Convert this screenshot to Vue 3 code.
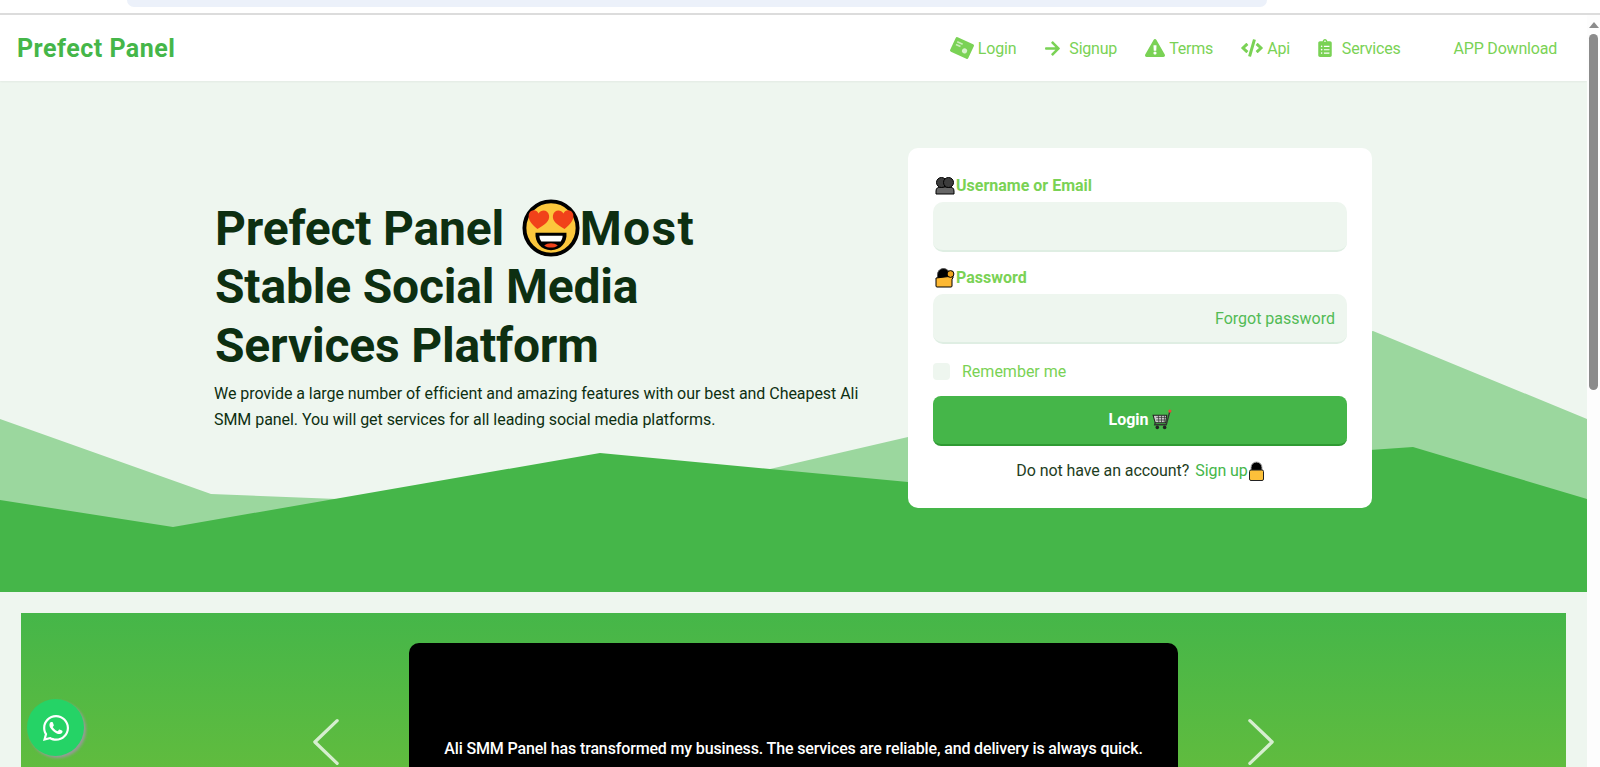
<template>
  <div class="window">
    <div class="chrome">
      <div class="address"></div>
    </div>
    <div class="viewport">
      <div class="page">
        <nav class="navbar">
          <a class="brand">Prefect Panel</a>
          <div class="nav-links">
            <a class="nav-link">
              <svg class="i-ticket" viewBox="0 0 24 24"><g transform="rotate(25 12 12)"><rect x="2" y="4" width="20" height="16" rx="1.5" fill="#7ad255"/><rect x="5" y="7.500" width="6" height="1.600" fill="#fff" opacity=".6"/><rect x="5" y="10.500" width="5" height="1.600" fill="#fff" opacity=".6"/><circle cx="15.500" cy="13.500" r="2.600" fill="#fff" opacity=".7"/></g></svg>
              <span>Login</span>
            </a>
            <a class="nav-link">
              <svg class="i-arrow" viewBox="0 0 448 512"><path d="M190.5 66.9l22.2-22.2c9.4-9.4 24.6-9.4 33.9 0L441 239c9.4 9.4 9.4 24.6 0 33.9L246.6 467.3c-9.4 9.4-24.6 9.4-33.9 0l-22.2-22.2c-9.5-9.5-9.3-25 .4-34.3L311.4 296H24c-13.3 0-24-10.7-24-24v-32c0-13.3 10.7-24 24-24h287.4L190.9 101.2c-9.8-9.3-10-24.8-.4-34.3z"/></svg>
              <span>Signup</span>
            </a>
            <a class="nav-link">
              <svg class="i-warn" viewBox="0 0 576 512"><path d="M569.517 440.013C587.975 472.007 564.806 512 527.94 512H48.054c-36.937 0-59.999-40.055-41.577-71.987L246.423 24.035c18.467-32.009 64.72-31.951 83.154 0l239.94 415.978zM288 354c-25.405 0-46 20.595-46 46s20.595 46 46 46 46-20.595 46-46-20.595-46-46-46zm-43.673-165.346l7.418 136c.347 6.364 5.609 11.346 11.982 11.346h48.546c6.373 0 11.635-4.982 11.982-11.346l7.418-136c.375-6.874-5.098-12.654-11.982-12.654h-63.383c-6.884 0-12.356 5.78-11.981 12.654z"/></svg>
              <span>Terms</span>
            </a>
            <a class="nav-link">
              <svg class="i-code" viewBox="0 0 640 512"><path d="M278.9 511.5l-61-17.7c-6.4-1.8-10-8.5-8.2-14.9L346.2 8.7c1.8-6.4 8.5-10.1 14.9-8.2l61 17.7c6.4 1.8 10 8.5 8.2 14.9L293.8 503.3c-1.9 6.4-8.5 10.1-14.9 8.2zm-114-112.2l43.5-46.4c4.6-4.9 4.3-12.7-.8-17.2L117 256l90.6-79.7c5.1-4.5 5.5-12.3.8-17.2l-43.5-46.4c-4.5-4.8-12.1-5.1-17-.5L3.8 247.2c-5.1 4.7-5.1 12.8 0 17.5l144.1 135.1c4.9 4.6 12.5 4.4 17-.5zm327.2.6l144.1-135.1c5.1-4.7 5.1-12.8 0-17.5L492.1 112.1c-4.8-4.5-12.4-4.3-17 .5L431.6 159c-4.6 4.9-4.3 12.7.8 17.2L523 256l-90.6 79.7c-5.1 4.5-5.5 12.3-.8 17.2l43.5 46.4c4.5 4.9 12.1 5.1 17 .6z"/></svg>
              <span>Api</span>
            </a>
            <a class="nav-link">
              <svg class="i-clip" viewBox="0 0 384 512"><path d="M336 64h-80c0-35.3-28.7-64-64-64s-64 28.7-64 64H48C21.5 64 0 85.5 0 112v352c0 26.5 21.5 48 48 48h288c26.5 0 48-21.5 48-48V112c0-26.5-21.5-48-48-48zM96 424c-13.3 0-24-10.7-24-24s10.7-24 24-24 24 10.7 24 24-10.7 24-24 24zm0-96c-13.3 0-24-10.7-24-24s10.7-24 24-24 24 10.7 24 24-10.7 24-24 24zm0-96c-13.3 0-24-10.7-24-24s10.7-24 24-24 24 10.7 24 24-10.7 24-24 24zm96-192c13.3 0 24 10.7 24 24s-10.7 24-24 24-24-10.7-24-24 10.7-24 24-24zm128 368c0 4.4-3.6 8-8 8H168c-4.4 0-8-3.6-8-8v-16c0-4.4 3.6-8 8-8h144c4.4 0 8 3.6 8 8v16zm0-96c0 4.4-3.6 8-8 8H168c-4.4 0-8-3.6-8-8v-16c0-4.4 3.6-8 8-8h144c4.4 0 8 3.6 8 8v16zm0-96c0 4.4-3.6 8-8 8H168c-4.4 0-8-3.6-8-8v-16c0-4.4 3.6-8 8-8h144c4.4 0 8 3.6 8 8v16z"/></svg>
              <span>Services</span>
            </a>
            <a class="nav-link app-link">APP Download</a>
          </div>
        </nav>

        <section class="hero">
          <svg class="waves" viewBox="0 0 1587 511" preserveAspectRatio="none">
            <polygon fill="#9bd79e" points="0,338 211,413 337,418 770,388 908,356 1373,250 1587,338 1587,511 0,511" />
            <polygon fill="#45b649" points="0,419 173,446 600,372 908,401 1413,366 1587,418 1587,511 0,511" />
          </svg>
          <div class="hero-text">
            <h1>
              Prefect Panel
              <svg class="face" viewBox="0 0 60 60">
                <circle cx="30" cy="30" r="27.500" fill="#fcc73c" stroke="#000" stroke-width="4" />
                <path d="M16 31C10 26 6 22 7 16c1-5 8-6 10-1 3-5 10-4 11 2 1 6-5 10-12 14z" fill="#f1421a" />
                <path d="M44 31c-7-4-13-8-12-14 1-6 8-7 11-2 2-5 9-4 10 1 1 6-3 10-9 15z" fill="#f1421a" />
                <path d="M14 35h32c1 10-6 18-16 18S13 45 14 35z" fill="#000" />
                <path d="M18 38h24c0 3-1 4-2 6H20c-1-2-2-3-2-6z" fill="#fff" />
                <path d="M23 48c4-3 10-3 14 0-4 3-10 3-14 0z" fill="#f1421a" />
              </svg>
              <span class="most">Most</span>
              Stable Social Media
              Services Platform
            </h1>
            <p>We provide a large number of efficient and amazing features with our best and Cheapest Ali SMM panel. You will get services for all leading social media platforms.</p>
          </div>

          <form class="login-card" @submit.prevent>
            <label class="field-label">
              <svg class="emoji" viewBox="0 0 20 20">
                <path d="M1 18v-3c0-3 2-4 5-4h8c3 0 5 1 5 4v3z" fill="#666" stroke="#000" />
                <circle cx="6.500" cy="6.500" r="5" fill="#3c3c3c" stroke="#000" />
                <circle cx="13.500" cy="6.500" r="5" fill="#3c3c3c" stroke="#000" />
              </svg>
              Username or Email
            </label>
            <div class="input"></div>

            <label class="field-label">
              <svg class="emoji" viewBox="0 0 20 20">
                <path d="M2.500 11V6.500a6 6 0 0 1 12 0V11z" fill="#000" stroke="#555" />
                <path d="M1 10 14 8.500l2-1 2 1v1.500l-1 1v7a1 1 0 0 1-1 1H2a1 1 0 0 1-1-1z" fill="#fdb833" stroke="#000" />
                <circle cx="15.500" cy="6" r="3.400" fill="#f0a41f" stroke="#000" />
              </svg>
              Password
            </label>
            <div class="input input-pass"><a class="forgot">Forgot password</a></div>

            <div class="remember">
              <span class="check"></span>
              <span>Remember me</span>
            </div>

            <button class="login-btn" type="button">
              Login
              <svg class="emoji cart" viewBox="0 0 20 20">
                <path d="M2 6h13l-1 7H4z" fill="#ccc" stroke="#222" />
                <path d="M4 13l-.5 2h11l3.500-13" fill="none" stroke="#333" stroke-width="1.300" />
                <path d="M5 8h9.500M5 10.500h9M7 6l.5 7M10 6v7M13 6l-.5 7" stroke="#333" stroke-width=".7" />
                <circle cx="18" cy="2" r="1.500" fill="#e8483b" />
                <circle cx="6" cy="17.500" r="1.700" fill="#222" />
                <circle cx="13" cy="17.500" r="1.700" fill="#222" />
              </svg>
            </button>

            <div class="signup-row">
              <span>Do not have an account?</span>
              <a class="signup">Sign up</a>
              <svg class="lock" viewBox="0 0 15 20">
                <path d="M2 11V6.500a5.500 5.500 0 0 1 11 0V11z" fill="#000" stroke="#aaa" />
                <rect x=".5" y="9" width="14" height="10.500" rx="1.500" fill="#fcc03a" stroke="#222" />
              </svg>
            </div>
          </form>
        </section>

        <section class="reviews">
          <div class="carousel">
            <svg class="chevron" viewBox="0 0 28 50"><path d="M26 2 2 25l24 23" /></svg>
            <div class="slide">
              <p>Ali SMM Panel has transformed my business. The services are reliable, and delivery is always quick.</p>
            </div>
            <svg class="chevron" viewBox="0 0 28 50"><path d="m2 2 24 23L2 48" /></svg>
          </div>
        </section>

        <a class="whatsapp">
          <svg viewBox="0 0 448 512"><path d="M380.9 97.1C339 55.1 283.2 32 223.9 32c-122.4 0-222 99.6-222 222 0 39.1 10.2 77.3 29.6 111L0 480l117.7-30.9c32.4 17.7 68.9 27 106.1 27h.1c122.3 0 224.1-99.6 224.1-222 0-59.3-25.2-115-67.1-157zm-157 341.6c-33.2 0-65.7-8.9-94-25.7l-6.7-4-69.8 18.3L72 359.2l-4.4-7c-18.5-29.4-28.2-63.3-28.2-98.2 0-101.7 82.8-184.5 184.6-184.5 49.3 0 95.6 19.2 130.4 54.1 34.8 34.9 56.2 81.2 56.1 130.5 0 101.8-84.9 184.6-186.6 184.6zm101.2-138.2c-5.5-2.8-32.8-16.2-37.9-18-5.1-1.9-8.8-2.8-12.5 2.8-3.7 5.6-14.3 18-17.6 21.8-3.2 3.7-6.5 4.2-12 1.4-32.6-16.3-54-29.1-75.5-66-5.7-9.8 5.7-9.1 16.3-30.3 1.8-3.7.9-6.9-.5-9.7-1.4-2.8-12.5-30.1-17.1-41.2-4.5-10.8-9.1-9.3-12.5-9.5-3.2-.2-6.9-.2-10.6-.2-3.7 0-9.7 1.4-14.8 6.9-5.1 5.6-19.4 19-19.4 46.3 0 27.3 19.9 53.7 22.6 57.4 2.8 3.7 39.1 59.7 94.8 83.8 35.2 15.2 49 16.5 66.6 13.9 10.700-1.6 32.8-13.4 37.4-26.4 4.6-13 4.6-24.1 3.2-26.4-1.3-2.5-5-3.9-10.5-6.6z" /></svg>
        </a>
      </div>

      <div class="scrollbar">
        <span class="scroll-up"></span>
        <span class="scroll-thumb"></span>
      </div>
    </div>
  </div>
</template>

<script setup>
</script>

<style>
html, body {
  margin: 0;
  overflow: hidden;
}
</style>

<style scoped>
.window {
  height: 767px;
  display: flex;
  flex-direction: column;
  overflow: hidden;
  background: #fff;
  font-family: Roboto, "Noto Sans", sans-serif;
}

.chrome {
  flex: none;
  height: 15px;
  box-sizing: border-box;
  padding: 0 333px 0 127px;
  border-bottom: 2px solid #dcdcdc;
}

.address {
  height: 7px;
  background: #ecf1fa;
  border-radius: 0 0 14px 14px;
}

.viewport {
  flex: 1;
  min-height: 0;
  display: flex;
}

.page {
  position: relative;
  flex: 1;
  min-width: 0;
  overflow: hidden;
  background: #eef6ef;
}

.scrollbar {
  width: 13px;
  flex: none;
  background: #fdfdfd;
  display: flex;
  flex-direction: column;
  align-items: center;
  padding-top: 7px;
}

.scroll-up {
  width: 0;
  height: 0;
  border-left: 5px solid transparent;
  border-right: 5px solid transparent;
  border-bottom: 6px solid #8b8b8b;
}

.scroll-thumb {
  width: 9px;
  height: 356px;
  margin-top: 6px;
  border-radius: 5px;
  background: #8b8b8b;
}

.navbar {
  position: relative;
  z-index: 1;
  height: 66px;
  display: flex;
  align-items: center;
  justify-content: space-between;
  padding: 0 30px 0 17px;
  background: #fff;
  box-shadow: 0 1px 2px rgba(0, 0, 0, .05);
}

.brand {
  font-size: 25px;
  font-weight: 700;
  letter-spacing: .5px;
  color: #45b649;
}

.nav-links {
  display: flex;
  align-items: center;
  gap: 28px;
  font-size: 16px;
  letter-spacing: -.2px;
  color: #7ad255;
}

.nav-link {
  display: flex;
  align-items: center;
  gap: 4px;
}

.nav-link svg {
  fill: #7ad255;
}

.i-ticket {
  width: 24px;
  height: 24px;
}

.i-arrow {
  width: 17px;
  height: 17px;
  margin-right: 4px;
}

.i-warn {
  width: 20px;
  height: 18px;
}

.i-code {
  width: 22px;
  height: 18px;
}

.i-clip {
  width: 14px;
  height: 18px;
  margin-right: 6px;
}

.app-link {
  margin-left: 25px;
}

.hero {
  position: relative;
  height: 511px;
  box-sizing: border-box;
  display: flex;
  align-items: center;
  justify-content: space-between;
  padding: 0 215px 18px 214px;
}

.waves {
  position: absolute;
  inset: 0;
  width: 100%;
  height: 100%;
}

.hero-text {
  position: relative;
  width: 660px;
  padding-bottom: 24px;
  color: #0d2f11;
}

h1 {
  margin: 0 0 0 1px;
  width: 520px;
  font-size: 48px;
  line-height: 58.5px;
  font-weight: 700;
  letter-spacing: -.2px;
}

.face {
  width: 58px;
  height: 58px;
  vertical-align: -12px;
  margin-left: 6px;
}

.most {
  letter-spacing: 1.3px;
}

.hero-text p {
  margin: 6px 0 0;
  font-size: 16px;
  line-height: 25.6px;
  letter-spacing: -.05px;
}

.login-card {
  position: relative;
  flex: none;
  width: 464px;
  height: 360px;
  box-sizing: border-box;
  margin-left: auto;
  padding: 26px 25px 0;
  background: #fff;
  border-radius: 10px;
}

.field-label {
  display: flex;
  align-items: center;
  gap: 1px;
  height: 24px;
  margin-bottom: 4px;
  padding-left: 2px;
  font-size: 16px;
  font-weight: 700;
  color: #7ad255;
}

.emoji {
  width: 20px;
  height: 20px;
  flex: none;
}

.cart {
  width: 21px;
  height: 21px;
}

.lock {
  width: 15px;
  height: 20px;
  flex: none;
  margin-left: -5px;
}

.input {
  height: 48px;
  margin-bottom: 14px;
  border-radius: 10px;
  background: #eef6ef;
  border-bottom: 2px solid #dfeee3;
}

.input-pass {
  display: flex;
  align-items: center;
  justify-content: flex-end;
  padding-right: 12px;
}

.forgot {
  padding-top: 2px;
  font-size: 16px;
  color: #52bb55;
}

.remember {
  display: flex;
  align-items: center;
  gap: 12px;
  height: 17px;
  margin-top: 19px;
  font-size: 16px;
  color: #7ad255;
}

.check {
  width: 17px;
  height: 17px;
  border-radius: 4px;
  background: #eef6ef;
}

.login-btn {
  display: flex;
  align-items: center;
  justify-content: center;
  gap: 2px;
  width: 100%;
  height: 50px;
  margin-top: 16px;
  padding: 0;
  border: 0;
  border-bottom: 2px solid #2f9a33;
  border-radius: 8px;
  background: #45b649;
  color: #fff;
  font: 700 16px Roboto, "Noto Sans", sans-serif;
}

.signup-row {
  display: flex;
  align-items: center;
  justify-content: center;
  gap: 6px;
  margin-top: 15px;
  font-size: 16px;
  letter-spacing: -.08px;
  color: #1e3d22;
}

.signup {
  color: #45b649;
}

.reviews {
  padding: 21px 21px 0;
  background: #eef6ef;
}

.carousel {
  display: flex;
  justify-content: center;
  gap: 70px;
  height: 400px;
  padding-top: 30px;
  box-sizing: border-box;
  background: linear-gradient(180deg, #45b649 0%, #61bc3e 40%, #7ec83a 100%);
}

.chevron {
  flex: none;
  width: 26px;
  height: 48px;
  margin-top: 75px;
  fill: none;
  stroke: rgba(255, 255, 255, .75);
  stroke-width: 3.500;
  stroke-linecap: round;
  stroke-linejoin: round;
}

.slide {
  width: 769px;
  height: 300px;
  box-sizing: border-box;
  padding-top: 95px;
  border-radius: 10px;
  background: #000;
  color: #fff;
  text-align: center;
}

.slide p {
  margin: 0;
  font-size: 16px;
  line-height: 22px;
  font-weight: 500;
  letter-spacing: -.15px;
}

.whatsapp {
  position: absolute;
  left: 27px;
  top: 684px;
  width: 57px;
  height: 57px;
  display: flex;
  align-items: center;
  justify-content: center;
  border-radius: 50%;
  background: #25d366;
  box-shadow: 2px 2px 3px #999;
}

.whatsapp svg {
  width: 26px;
  height: 30px;
  fill: #fff;
}
</style>
